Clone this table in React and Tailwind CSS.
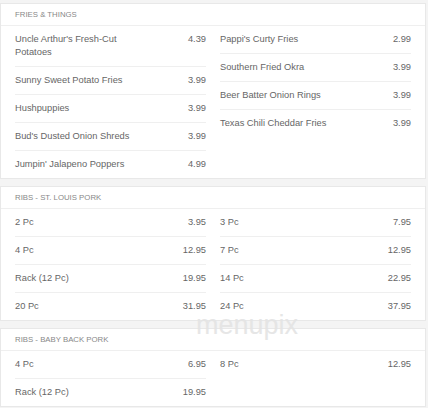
import React from 'react';

const sections = [
    {
        title: 'Fries & Things',
        left: [
            { name: "Uncle Arthur's Fresh-Cut Potatoes", price: '4.39' },
            { name: 'Sunny Sweet Potato Fries', price: '3.99' },
            { name: 'Hushpuppies', price: '3.99' },
            { name: "Bud's Dusted Onion Shreds", price: '3.99' },
            { name: "Jumpin' Jalapeno Poppers", price: '4.99' },
        ],
        right: [
            { name: "Pappi's Curty Fries", price: '2.99' },
            { name: 'Southern Fried Okra', price: '3.99' },
            { name: 'Beer Batter Onion Rings', price: '3.99' },
            { name: 'Texas Chili Cheddar Fries', price: '3.99' },
        ],
    },
    {
        title: 'Ribs - St. Louis Pork',
        left: [
            { name: '2 Pc', price: '3.95' },
            { name: '4 Pc', price: '12.95' },
            { name: 'Rack (12 Pc)', price: '19.95' },
            { name: '20 Pc', price: '31.95' },
        ],
        right: [
            { name: '3 Pc', price: '7.95' },
            { name: '7 Pc', price: '12.95' },
            { name: '14 Pc', price: '22.95' },
            { name: '24 Pc', price: '37.95' },
        ],
    },
    {
        title: 'Ribs - Baby Back Pork',
        left: [
            { name: '4 Pc', price: '6.95' },
            { name: 'Rack (12 Pc)', price: '19.95' },
        ],
        right: [
            { name: '8 Pc', price: '12.95' },
        ],
    },
];

const Column = ({ items }) => (
    <div className="px-[7px]">
        {items.map((item, i) => (
            <div
                key={item.name}
                className={`flex justify-between gap-4 py-[7px] ${i < items.length - 1 ? 'border-b border-[#efefef]' : ''}`}
            >
                <span className="max-w-[120px]">{item.name}</span>
                <span>{item.price}</span>
            </div>
        ))}
    </div>
);

export default function App() {
    return (
        <div
            className="relative min-h-[408px] bg-[#f4f4f4] pt-[3px] pr-[2px] text-[9.3px] leading-[13px] text-[#666]"
            style={{ fontFamily: '"Liberation Sans", Arial, sans-serif' }}
        >
            {sections.map((section, idx) => (
                <div
                    key={section.title}
                    className={`bg-white border border-[#e8e8e8] ${idx > 0 ? 'mt-[7px]' : ''}`}
                >
                    <div className="h-[22px] flex items-center px-[14px] border-b border-[#efefef] text-[7.8px] uppercase text-[#888]">
                        {section.title}
                    </div>
                    <div className="grid grid-cols-2 px-[7px]">
                        <Column items={section.left} />
                        <Column items={section.right} />
                    </div>
                </div>
            ))}

            {/* watermark */}
            <div className="absolute left-[196px] top-[312px] text-[27px] leading-none text-[#e4e4e4] opacity-90 pointer-events-none select-none">
                menupix
            </div>
        </div>
    );
}
